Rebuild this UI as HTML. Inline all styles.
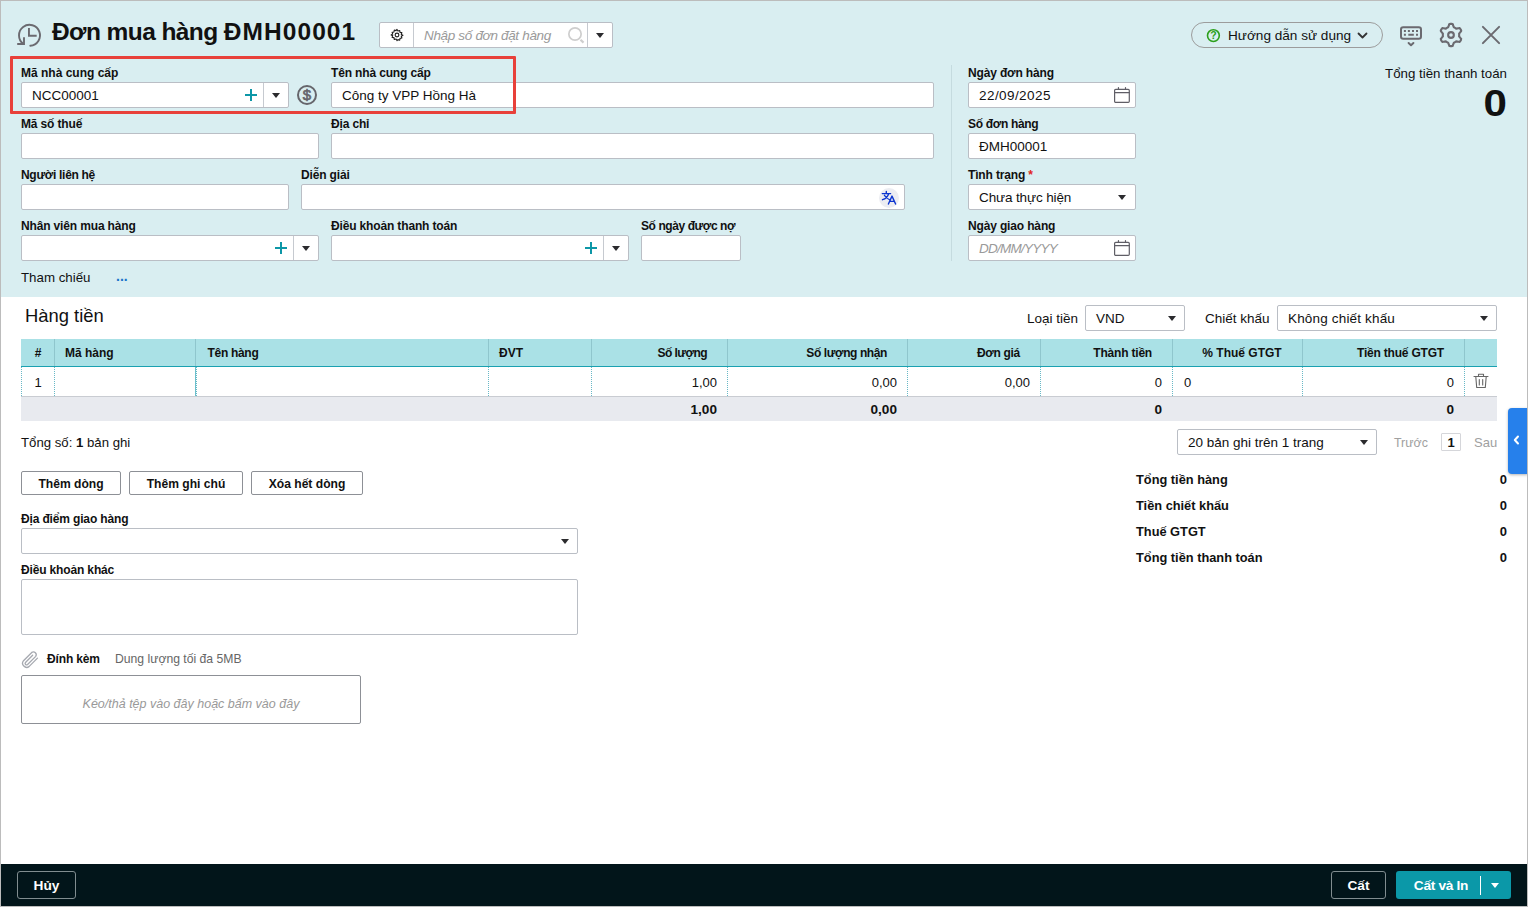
<!DOCTYPE html>
<html lang="vi">
<head>
<meta charset="utf-8">
<title>Đơn mua hàng ĐMH00001</title>
<style>
*{box-sizing:border-box;margin:0;padding:0}
html,body{width:1528px;height:907px;overflow:hidden;background:#b4b4b4}
body{font-family:"Liberation Sans",sans-serif;font-size:13px;color:#111;position:relative}
#app{position:absolute;left:0;top:0;width:1528px;height:907px;background:#fff;overflow:hidden}
#frame{position:absolute;left:0;top:0;width:1528px;height:907px;border:1px solid #bcbcbc;z-index:50;pointer-events:none}
#top{position:absolute;left:0;top:0;width:1528px;height:297px;background:#d9eef1}
.a{position:absolute;white-space:nowrap}
.lb{position:absolute;white-space:nowrap;font-weight:bold;font-size:12px;line-height:14px;color:#111;letter-spacing:-.15px}
.in{position:absolute;height:26px;background:#fff;border:1px solid #babec5;border-radius:2px}
.in .t{position:absolute;left:10px;top:1px;line-height:24px;font-size:13.5px;white-space:nowrap;color:#111}
.in .ph{color:#9a9a9a;font-style:italic}
.dv{position:absolute;top:0;width:1px;height:24px;background:#c6cad0}
.ar{position:absolute;width:0;height:0;border-left:4px solid transparent;border-right:4px solid transparent;border-top:5px solid #2b2b2e}
.pl{position:absolute;width:12px;height:12px}
.pl:before{content:"";position:absolute;left:0;top:5px;width:12px;height:2px;background:#0d97a7}
.pl:after{content:"";position:absolute;left:5px;top:0;width:2px;height:12px;background:#0d97a7}
.btn{position:absolute;height:24px;border:1px solid #8d9096;border-radius:2px;background:#fff;font-weight:bold;font-size:12.1px;line-height:25px;text-align:center;color:#111}

.th{position:absolute;top:340px;height:28px;line-height:27px;font-size:12px;font-weight:bold;color:#111;white-space:nowrap}
.td{position:absolute;top:368px;height:30px;line-height:30px;font-size:13px;color:#111;white-space:nowrap}
.sm{position:absolute;top:398px;height:24px;line-height:24px;font-size:13.6px;font-weight:bold;color:#111;white-space:nowrap}
.vl{position:absolute;top:339px;width:1px;height:27px;background:#8fc6cd}
.dl{position:absolute;top:367px;width:0;height:29px;border-left:1px dotted #68b8c6}
.sl{position:absolute;left:1136px;margin-top:1px;font-size:12.8px;font-weight:bold;line-height:16px;white-space:nowrap;color:#111}
.sv{position:absolute;right:21px;margin-top:1px;font-size:13px;font-weight:bold;line-height:16px;white-space:nowrap;color:#111}
</style>
</head>
<body>
<div id="app">
<div id="top"></div>
<div id="frame"></div>
<!-- title bar -->
<svg class="a" style="left:14px;top:20px" width="30" height="30" viewBox="0 0 30 30" fill="none" stroke="#6b6a70" stroke-width="1.9"><path d="M16.3 25.800A10.500 10.500 0 1 0 9.300 23.800" stroke-linecap="round"/><path d="M14.950 8.100V15.800H22.700"/><path d="M10 17.300V24H3.200"/></svg>
<div class="a" id="title" style="left:52px;top:15px;font-size:24.5px;line-height:34px;font-weight:bold;color:#111"><span style="letter-spacing:-.58px">Đơn mua hàng </span><span style="letter-spacing:1.05px">ĐMH00001</span></div>
<div class="in" style="left:379px;top:22px;width:234px">
  <svg class="a" style="left:10px;top:5px" width="14" height="14" viewBox="0 0 24 24" fill="none" stroke="#222" stroke-width="2"><circle cx="12" cy="12" r="3.2"/><path d="M12 2.5l1.6 2.7 3-.9.6 3.1 3.1.6-.9 3 2.7 1.6-2.7 1.6.9 3-3.1.6-.6 3.1-3-.9L12 21.5l-1.6-2.7-3 .9-.6-3.1-3.1-.6.9-3L1.9 12l2.7-1.6-.9-3 3.1-.6.6-3.1 3 .9z" stroke-linejoin="round"/></svg>
  <div class="dv" style="left:33px"></div>
  <div class="t ph" style="left:44px;letter-spacing:-.33px">Nhập số đơn đặt hàng</div>
  <svg class="a" style="left:187px;top:3px" width="20" height="20" viewBox="0 0 20 20" fill="none" stroke="#cecece"><circle cx="8" cy="8" r="6.150" stroke-width="1.700"/><path d="M13.500 13.700l3 2.900" stroke-width="2.200"/></svg>
  <div class="dv" style="left:207px"></div>
  <div class="ar" style="left:216px;top:10px"></div>
</div>
<!-- help pill -->
<div class="a" style="left:1191px;top:22px;width:192px;height:26px;border:1px solid #9c9c9c;border-radius:13px"></div>
<svg class="a" style="left:1206px;top:28px" width="15" height="15" viewBox="0 0 15 15"><circle cx="7.400" cy="7.600" r="5.900" fill="none" stroke="#2ca01c" stroke-width="1.600"/><text x="7.400" y="11.100" font-size="10.500" font-weight="bold" font-family="Liberation Sans,sans-serif" text-anchor="middle" fill="#2ca01c">?</text></svg>
<div class="a" style="left:1228px;top:28px;font-size:13.6px;line-height:16px;color:#111">Hướng dẫn sử dụng</div>
<svg class="a" style="left:1357px;top:32px" width="11" height="8" viewBox="0 0 11 8" fill="none" stroke="#333" stroke-width="1.8" stroke-linecap="round" stroke-linejoin="round"><path d="M1.5 1.5l4 4 4-4"/></svg>
<!-- keyboard -->
<svg class="a" style="left:1396px;top:22px" width="30" height="28" viewBox="0 0 30 28" fill="none" stroke="#6b6a70" stroke-width="2"><rect x="5" y="5.200" width="20" height="11.600" rx="2.200"/><path d="M7.900 9h2M11.900 9h2M16 9h2M20 9h2M7.900 12.800h2M12.300 12.800h5.500M20 12.800h2"/><path d="M12.600 21l2.400 2.200 2.400-2.200" stroke-linecap="round" stroke-linejoin="round"/></svg>
<!-- gear -->
<svg class="a" style="left:1436px;top:20px" width="30" height="30" viewBox="0 0 30 30" fill="none" stroke="#6b6a70" stroke-width="2.1" stroke-linejoin="round"><circle cx="15" cy="15" r="2.85"/><path d="M12.10 7.33L13.00 5.10Q13.00 3.90 14.20 3.90L15.80 3.90Q17.00 3.90 17.00 5.10L17.90 7.33A8.20 8.20 0 0 1 20.19 8.65L22.57 8.32Q23.61 7.72 24.21 8.76L25.01 10.14Q25.61 11.18 24.57 11.78L23.09 13.68A8.20 8.20 0 0 1 23.09 16.32L24.57 18.22Q25.61 18.82 25.01 19.86L24.21 21.24Q23.61 22.28 22.57 21.68L20.19 21.35A8.20 8.20 0 0 1 17.90 22.67L17.00 24.90Q17.00 26.10 15.80 26.10L14.20 26.10Q13.00 26.10 13.00 24.90L12.10 22.67A8.20 8.20 0 0 1 9.81 21.35L7.43 21.68Q6.39 22.28 5.79 21.24L4.99 19.86Q4.39 18.82 5.43 18.22L6.91 16.32A8.20 8.20 0 0 1 6.91 13.68L5.43 11.78Q4.39 11.18 4.99 10.14L5.79 8.76Q6.39 7.72 7.43 8.32L9.81 8.65A8.20 8.20 0 0 1 12.10 7.33Z"/></svg>
<!-- close -->
<svg class="a" style="left:1480px;top:24px" width="22" height="22" viewBox="0 0 22 22" fill="none" stroke="#6b6a70" stroke-width="2" stroke-linecap="round"><path d="M2.900 2.900l16.200 16.200M19.100 2.900l-16.200 16.200"/></svg>
<!-- red highlight -->
<div class="a" style="left:10px;top:56px;width:506px;height:58px;border:3px solid #e8403a;border-radius:1px;z-index:5"></div>
<div class="lb" style="left:21px;top:66px;letter-spacing:0">Mã nhà cung cấp</div>
<div class="in" style="left:21px;top:82px;width:268px"><div class="t">NCC00001</div><div class="pl" style="left:223px;top:6px"></div><div class="dv" style="left:241px"></div><div class="ar" style="left:250px;top:10px"></div></div>
<svg class="a" style="left:297px;top:85px" width="20" height="20" viewBox="0 0 20 20"><circle cx="10" cy="10" r="9" fill="none" stroke="#66656b" stroke-width="2"/><text x="10" y="15.300" font-size="15" font-family="Liberation Sans,sans-serif" text-anchor="middle" fill="#66656b" stroke="#66656b" stroke-width=".7">$</text></svg>
<div class="lb" style="left:331px;top:66px">Tên nhà cung cấp</div>
<div class="in" style="left:331px;top:82px;width:603px"><div class="t">Công ty VPP Hồng Hà</div></div>
<div class="lb" style="left:21px;top:117px">Mã số thuế</div>
<div class="in" style="left:21px;top:133px;width:298px"></div>
<div class="lb" style="left:331px;top:117px">Địa chỉ</div>
<div class="in" style="left:331px;top:133px;width:603px"></div>
<div class="lb" style="left:21px;top:168px;letter-spacing:-.3px">Người liên hệ</div>
<div class="in" style="left:21px;top:184px;width:268px"></div>
<div class="lb" style="left:301px;top:168px">Diễn giải</div>
<div class="in" style="left:301px;top:184px;width:604px"><div class="a" style="right:5px;top:3px;width:20px;height:20px;border-radius:10px;background:#ecedf2"></div><svg class="a" style="left:579px;top:4px" width="17" height="17" viewBox="0 0 17 17" fill="none" stroke="#0c35d0" stroke-width="1.4" stroke-linecap="round" stroke-linejoin="round"><path d="M1.300 4.600h8.300M5.300 2.400v2.200M7.600 4.700C6.800 7.600 4.600 9.800 1.500 10.700M3.400 6.300C4.400 8.300 6.400 10 9 10.800"/><path d="M7.400 15l3.600-7.900 3.600 7.900M8.700 12.400h4.600"/></svg></div>
<div class="lb" style="left:21px;top:219px">Nhân viên mua hàng</div>
<div class="in" style="left:21px;top:235px;width:298px"><div class="pl" style="left:253px;top:6px"></div><div class="dv" style="left:271px"></div><div class="ar" style="left:280px;top:10px"></div></div>
<div class="lb" style="left:331px;top:219px">Điều khoản thanh toán</div>
<div class="in" style="left:331px;top:235px;width:298px"><div class="pl" style="left:253px;top:6px"></div><div class="dv" style="left:271px"></div><div class="ar" style="left:280px;top:10px"></div></div>
<div class="lb" style="left:641px;top:219px;letter-spacing:-.42px">Số ngày được nợ</div>
<div class="in" style="left:641px;top:235px;width:100px"></div>
<div class="a" style="left:21px;top:270px;font-size:13.3px;line-height:16px;color:#111">Tham chiếu</div>
<div class="a" style="left:116px;top:268px;font-size:14px;line-height:16px;color:#1a73c9;font-weight:bold">...</div>
<div class="a" style="left:951px;top:65px;width:1px;height:196px;background:#c5dbdf"></div>
<div class="lb" style="left:968px;top:66px">Ngày đơn hàng</div>
<div class="in" style="left:968px;top:82px;width:168px"><div class="t" style="letter-spacing:.43px">22/09/2025</div><div class="dv" style="left:140px;display:none"></div><svg class="a" style="left:143px;top:2px" width="20" height="20" viewBox="0 0 20 20" fill="none" stroke="#5f5e66" stroke-width="1.2"><rect x="2.600" y="4.400" width="14.700" height="12.900" rx="1.100"/><path d="M2.600 7.600h14.700M6.450 2.500v1.900M13.500 2.500v1.900" stroke-linecap="round"/></svg></div>
<div class="lb" style="left:968px;top:117px;letter-spacing:-.33px">Số đơn hàng</div>
<div class="in" style="left:968px;top:133px;width:168px"><div class="t">ĐMH00001</div></div>
<div class="lb" style="left:968px;top:168px">Tình trạng <span style="color:#e0241b">*</span></div>
<div class="in" style="left:968px;top:184px;width:168px"><div class="t" style="letter-spacing:-.12px">Chưa thực hiện</div><div class="ar" style="left:149px;top:10px"></div></div>
<div class="lb" style="left:968px;top:219px">Ngày giao hàng</div>
<div class="in" style="left:968px;top:235px;width:168px"><div class="t ph" style="letter-spacing:-.75px">DD/MM/YYYY</div><svg class="a" style="left:143px;top:2px" width="20" height="20" viewBox="0 0 20 20" fill="none" stroke="#5f5e66" stroke-width="1.2"><rect x="2.600" y="4.400" width="14.700" height="12.900" rx="1.100"/><path d="M2.600 7.600h14.700M6.450 2.500v1.900M13.500 2.500v1.900" stroke-linecap="round"/></svg></div>
<div class="a" style="right:21px;top:66px;font-size:13.3px;line-height:16px;color:#111">Tổng tiền thanh toán</div>
<div class="a" id="big0" style="right:21px;top:83px;font-size:36px;line-height:42px;font-weight:bold;color:#111;transform:scaleX(1.17);transform-origin:right center">0</div>
<!-- grid section -->
<div class="a" style="left:25px;top:304px;font-size:18.4px;line-height:24px;color:#111">Hàng tiền</div>
<div class="a" style="left:1027px;top:311px;font-size:13.5px;line-height:16px">Loại tiền</div>
<div class="in" style="left:1085px;top:305px;width:100px"><div class="t">VND</div><div class="ar" style="left:82px;top:10px"></div></div>
<div class="a" style="left:1205px;top:311px;font-size:13.5px;line-height:16px">Chiết khấu</div>
<div class="in" style="left:1277px;top:305px;width:220px"><div class="t" style="letter-spacing:.17px">Không chiết khấu</div><div class="ar" style="left:202px;top:10px"></div></div>
<div class="a" style="left:21px;top:339px;width:1476px;height:28px;background:#aae1e6;border-bottom:1px solid #1aa1b1"></div>
<div class="vl" style="left:54px"></div><div class="vl" style="left:195px"></div><div class="vl" style="left:488px"></div><div class="vl" style="left:591px"></div><div class="vl" style="left:727px"></div><div class="vl" style="left:907px"></div><div class="vl" style="left:1040px"></div><div class="vl" style="left:1172px"></div><div class="vl" style="left:1302px"></div><div class="vl" style="left:1464px"></div>
<div class="th" style="left:21px;width:34px;text-align:center">#</div><div class="th" style="left:65px">Mã hàng</div><div class="th" style="left:207.5px;letter-spacing:-.3px">Tên hàng</div><div class="th" style="left:499px">ĐVT</div><div class="th" style="left:591px;width:116px;text-align:right;letter-spacing:-.55px;padding-right:0">Số lượng</div><div class="th" style="left:727px;width:160px;text-align:right;letter-spacing:-.4px">Số lượng nhận</div><div class="th" style="left:907px;width:113px;text-align:right;letter-spacing:-.3px">Đơn giá</div><div class="th" style="left:1040px;width:112px;text-align:right;letter-spacing:-.2px">Thành tiền</div><div class="th" style="left:1177px;width:130px;text-align:center">% Thuế GTGT</div><div class="th" style="left:1302px;width:142px;text-align:right;letter-spacing:-.2px">Tiền thuế GTGT</div>
<div class="a" style="left:21px;top:396px;width:1476px;height:1px;background:#c9ccd2"></div>
<div class="dl" style="left:21px"></div><div class="dl" style="left:54px"></div><div class="dl" style="left:195px"></div><div class="dl" style="left:488px"></div><div class="dl" style="left:591px"></div><div class="dl" style="left:727px"></div><div class="dl" style="left:907px"></div><div class="dl" style="left:1040px"></div><div class="dl" style="left:1172px"></div><div class="dl" style="left:1302px"></div><div class="dl" style="left:1464px"></div><div class="a" style="left:195px;top:367px;width:1px;height:29px;background:#6cc0cc"></div><div class="dl" style="left:196px"></div>
<div class="td" style="left:21px;width:34px;text-align:center">1</div><div class="td" style="left:591px;width:126px;text-align:right">1,00</div><div class="td" style="left:727px;width:170px;text-align:right">0,00</div><div class="td" style="left:907px;width:123px;text-align:right">0,00</div><div class="td" style="left:1040px;width:122px;text-align:right">0</div><div class="td" style="left:1184px">0</div><div class="td" style="left:1302px;width:152px;text-align:right">0</div>
<svg class="a" style="left:1472px;top:372px" width="18" height="18" viewBox="0 0 18 18" fill="none" stroke="#666" stroke-width="1.1" stroke-linecap="round" stroke-linejoin="round"><path d="M2 4.500h14M6.500 4.300V2.200h5v2.100M3.800 4.800l.9 10.700h8.600l.9-10.700M7.300 7.500v5.500M10.700 7.500v5.500"/></svg>
<div class="a" style="left:21px;top:397px;width:1476px;height:24px;background:#e8eaef"></div>
<div class="sm" style="left:591px;width:126px;text-align:right">1,00</div><div class="sm" style="left:727px;width:170px;text-align:right">0,00</div><div class="sm" style="left:1040px;width:122px;text-align:right">0</div><div class="sm" style="left:1302px;width:152px;text-align:right">0</div>
<div class="a" style="left:21px;top:435px;font-size:13.2px;line-height:16px">Tổng số: <b>1</b> bản ghi</div>
<div class="in" style="left:1177px;top:429px;width:200px"><div class="t">20 bản ghi trên 1 trang</div><div class="ar" style="left:182px;top:10px"></div></div>
<div class="a" style="left:1394px;top:435px;font-size:12.4px;line-height:16px;color:#a0a0a0">Trước</div>
<div class="a" style="left:1441px;top:433px;width:20px;height:18px;border:1px solid #d5d6da;border-radius:1px;font-size:13px;line-height:18px;font-weight:bold;text-align:center">1</div>
<div class="a" style="left:1474px;top:435px;font-size:13px;line-height:16px;color:#a0a0a0">Sau</div>
<div class="a" style="left:1508px;top:408px;width:20px;height:66px;background:#2680eb;border-radius:4px 0 0 4px;box-shadow:0 1px 3px rgba(0,0,0,.3)"></div>
<svg class="a" style="left:1513px;top:435px" width="7" height="10" viewBox="0 0 7 10" fill="none" stroke="#fff" stroke-width="2" stroke-linecap="round" stroke-linejoin="round"><path d="M5 1.500L1.800 5 5 8.500"/></svg>
<div class="btn" style="left:21px;top:471px;width:100px">Thêm dòng</div>
<div class="btn" style="left:129px;top:471px;width:114px">Thêm ghi chú</div>
<div class="btn" style="left:251px;top:471px;width:112px">Xóa hết dòng</div>
<div class="sl" style="top:471px">Tổng tiền hàng</div><div class="sv" style="top:471px">0</div>
<div class="sl" style="top:497px">Tiền chiết khấu</div><div class="sv" style="top:497px">0</div>
<div class="sl" style="top:523px">Thuế GTGT</div><div class="sv" style="top:523px">0</div>
<div class="sl" style="top:549px">Tổng tiền thanh toán</div><div class="sv" style="top:549px">0</div>
<div class="lb" style="left:21px;top:512px">Địa điểm giao hàng</div>
<div class="in" style="left:21px;top:528px;width:557px"><div class="ar" style="left:539px;top:10px"></div></div>
<div class="lb" style="left:21px;top:563px">Điều khoản khác</div>
<div class="in" style="left:21px;top:579px;width:557px;height:56px"></div>
<svg class="a" style="left:19px;top:649px" width="22" height="22" viewBox="0 0 20 20" fill="none" stroke="#a6a9b0" stroke-width="1.2" stroke-linecap="round"><path d="M16.800 8.300l-7.500 7.500a3.700 3.700 0 0 1-5.200-5.200l7.500-7.500a2.600 2.600 0 0 1 3.600 3.600l-7.400 7.400a1.350 1.350 0 0 1-1.900-1.900l6.500-6.500"/></svg>
<div class="lb" style="left:47px;top:652px">Đính kèm</div>
<div class="a" style="left:115px;top:651px;font-size:12.2px;line-height:16px;color:#666">Dung lượng tối đa 5MB</div>
<div class="a" style="left:21px;top:675px;width:340px;height:49px;border:1px solid #8d9096;border-radius:2px;background:#fff;text-align:center;font-size:12.5px;line-height:57px;font-style:italic;color:#999">Kéo/thả tệp vào đây hoặc bấm vào đây</div>
<div class="a" style="left:0;top:864px;width:1528px;height:42px;background:#02151a"></div>
<div class="a" style="left:17px;top:871px;width:59px;height:28px;border:1px solid #818d90;border-radius:3px;color:#fff;font-weight:bold;font-size:13.7px;line-height:27px;text-align:center">Hủy</div>
<div class="a" style="left:1331px;top:871px;width:55px;height:28px;border:1px solid #818d90;border-radius:3px;color:#fff;font-weight:bold;font-size:13.7px;line-height:27px;text-align:center">Cất</div>
<div class="a" style="left:1396px;top:871px;width:115px;height:28px;border-radius:3px;background:#0b98a8"></div>
<div class="a" style="left:1396px;top:871px;width:90px;height:28px;color:#fff;font-weight:bold;font-size:13.7px;line-height:29px;letter-spacing:-.3px;text-align:center">Cất và In</div>
<div class="a" style="left:1480px;top:876px;width:1px;height:19px;background:#fff"></div>
<div class="ar" style="left:1491px;top:883px;border-top-color:#fff"></div>
<!-- content goes here -->
</div>
</body>
</html>
